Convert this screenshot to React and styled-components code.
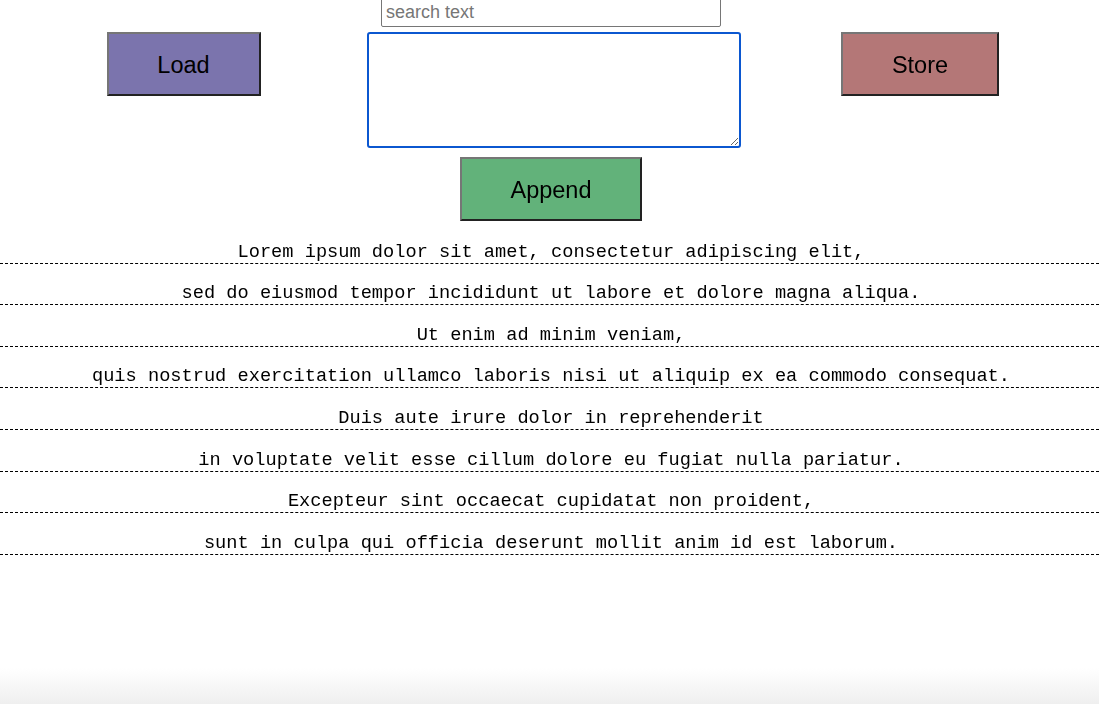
import styled, { createGlobalStyle } from 'styled-components';

const lines = [
  'Lorem ipsum dolor sit amet, consectetur adipiscing elit,',
  'sed do eiusmod tempor incididunt ut labore et dolore magna aliqua.',
  'Ut enim ad minim veniam,',
  'quis nostrud exercitation ullamco laboris nisi ut aliquip ex ea commodo consequat.',
  'Duis aute irure dolor in reprehenderit',
  'in voluptate velit esse cillum dolore eu fugiat nulla pariatur.',
  'Excepteur sint occaecat cupidatat non proident,',
  'sunt in culpa qui officia deserunt mollit anim id est laborum.',
];

export default function App() {
  return (
    <>
      <GlobalStyle />
      <Page>
        <SearchRow>
          <Search type="text" placeholder="search text" />
        </SearchRow>
        <EditorRow>
          <ActionButton $bg="#7b74ad" $width={154}>
            Load
          </ActionButton>
          <Editor autoFocus />
          <ActionButton $bg="#b47777" $width={158}>
            Store
          </ActionButton>
        </EditorRow>
        <AppendRow>
          <ActionButton $bg="#62b27a" $width={182}>
            Append
          </ActionButton>
        </AppendRow>
        <List>
          {lines.map((line) => (
            <Line key={line}>{line}</Line>
          ))}
        </List>
      </Page>
    </>
  );
}

const GlobalStyle = createGlobalStyle`
  html, body {
    margin: 0;
    height: 100%;
  }

  body {
    font-family: 'Liberation Sans', Arial, sans-serif;
    background: linear-gradient(to bottom, #ffffff calc(100% - 36px), #efefef 100%);
    overflow: hidden;
  }
`;

const Page = styled.main`
  margin-top: -4px;
`;

const SearchRow = styled.div`
  display: flex;
  justify-content: center;
  padding-left: 3px;
`;

const Search = styled.input`
  box-sizing: border-box;
  width: 340px;
  height: 31px;
  padding: 1px 4px 0;
  border: 1px solid #767676;
  border-radius: 2px;
  font-family: 'Liberation Sans', Arial, sans-serif;
  font-size: 18px;
  color: #000;
  outline: none;

  &::placeholder {
    color: #767676;
  }
`;

const EditorRow = styled.div`
  display: grid;
  grid-template-columns: 367px 374px 1fr;
  align-items: start;
  justify-items: center;
  margin-top: 5px;
`;

const ActionButton = styled.button`
  box-sizing: border-box;
  width: ${(p) => p.$width}px;
  height: 64px;
  padding: 2px 0 0;
  background: ${(p) => p.$bg};
  border-style: solid;
  border-width: 2px;
  border-color: #767676 #222 #222 #767676;
  font-family: 'Liberation Sans', Arial, sans-serif;
  font-size: 23.5px;
  color: #000;
  cursor: pointer;
`;

const Editor = styled.textarea`
  box-sizing: border-box;
  width: 374px;
  height: 116px;
  padding: 2px;
  border: 2px solid #0b57d0;
  border-radius: 3px;
  outline: none;
  font-family: 'Liberation Mono', monospace;
  font-size: 13px;
  resize: both;
`;

const AppendRow = styled.div`
  display: flex;
  justify-content: center;
  padding-left: 3px;
  margin-top: 9px;
`;

const List = styled.div`
  margin-top: 1px;
`;

const Line = styled.p`
  margin: 0;
  padding: 19.6px 0 0 3px;
  line-height: 21px;
  border-bottom: 1px dashed #000;
  text-align: center;
  font-family: 'Courier New', 'Liberation Mono', monospace;
  font-size: 18.67px;
  color: #000;
  white-space: nowrap;
`;
